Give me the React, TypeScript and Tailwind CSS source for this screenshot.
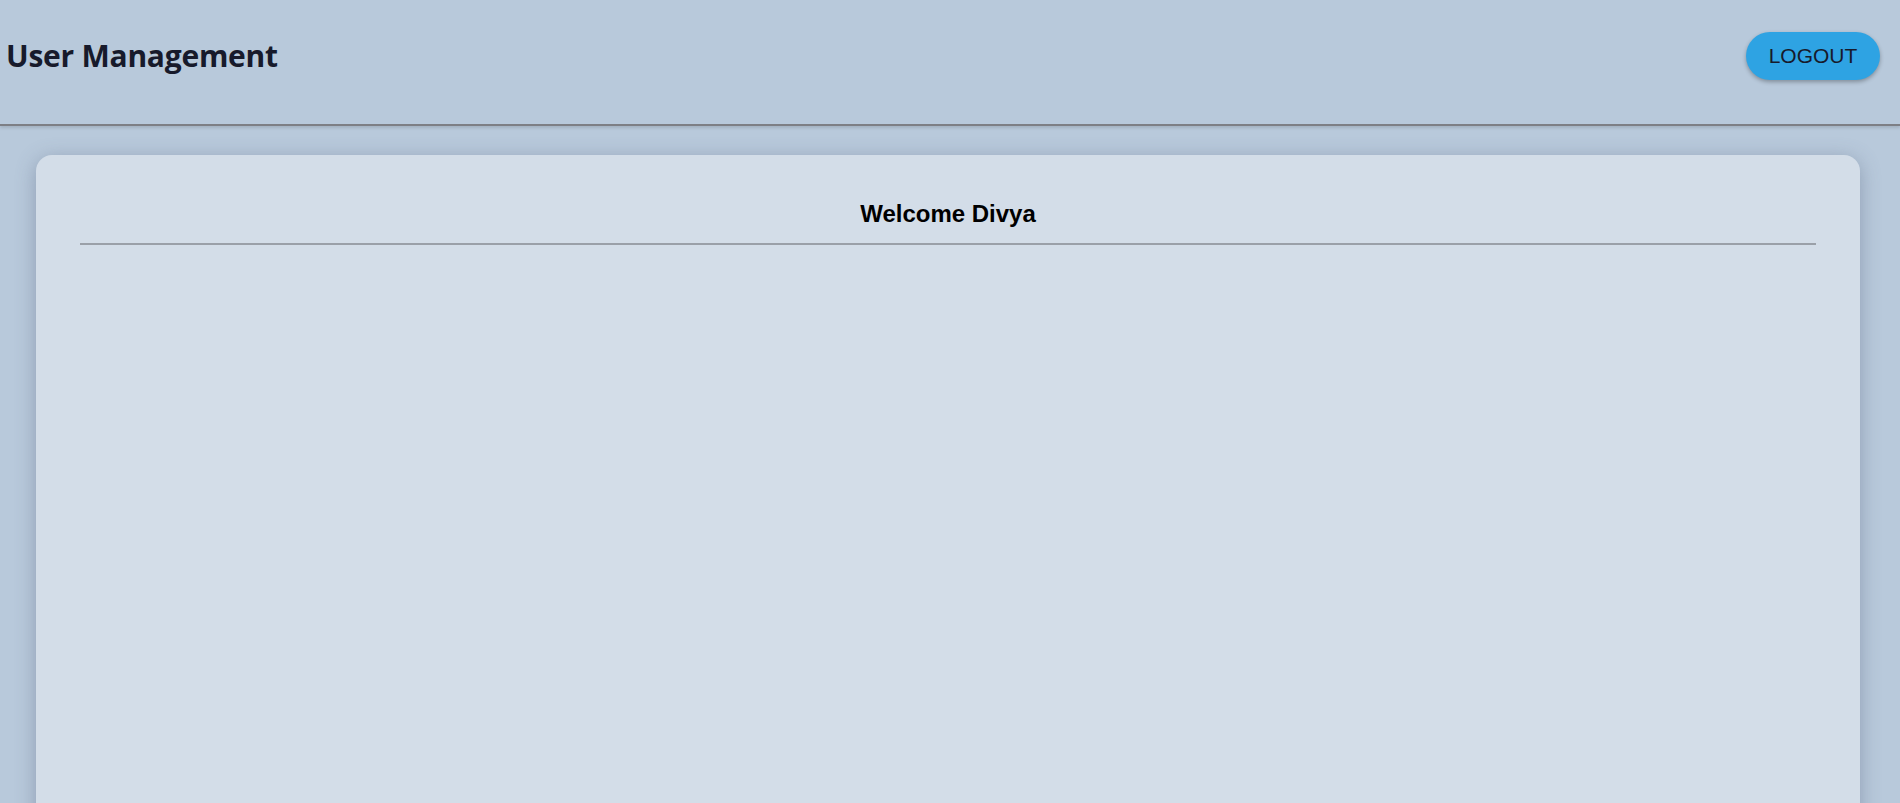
export default function App() {
  return (
    <div className="min-h-screen bg-[#b8c9db]" style={{ fontFamily: "'Liberation Sans', Arial, sans-serif" }}>
      <header className="flex h-[126px] items-start justify-between border-b-2 border-[#7d7f85] px-[6px] pt-[32px] shadow-[0_2px_3px_rgba(0,0,0,0.12)]">
        <h1 className="mt-[3px] font-['Open_Sans',sans-serif] text-[30px] leading-[42px] font-bold tracking-[-0.25px] text-[#171a2b]">User Management</h1>
        <button className="mr-[14px] h-[48px] w-[134px] rounded-full bg-[#2ea3e3] text-[21px] text-[#171a2b] shadow-[0_2px_4px_rgba(0,0,0,0.3)]">
          LOGOUT
        </button>
      </header>
      <main className="px-[36px] pt-[29px]">
        <div className="min-h-[700px] w-[1824px] rounded-[16px] bg-[#d3dde8] px-[44px] pt-[41px] shadow-[0_4px_20px_rgba(90,105,130,0.45)]">
          <h2 className="pb-[11px] text-center text-[24px] font-bold text-black">Welcome Divya</h2>
          <div className="h-[2px] bg-[#9aa0a8]" />
        </div>
      </main>
    </div>
  );
}
